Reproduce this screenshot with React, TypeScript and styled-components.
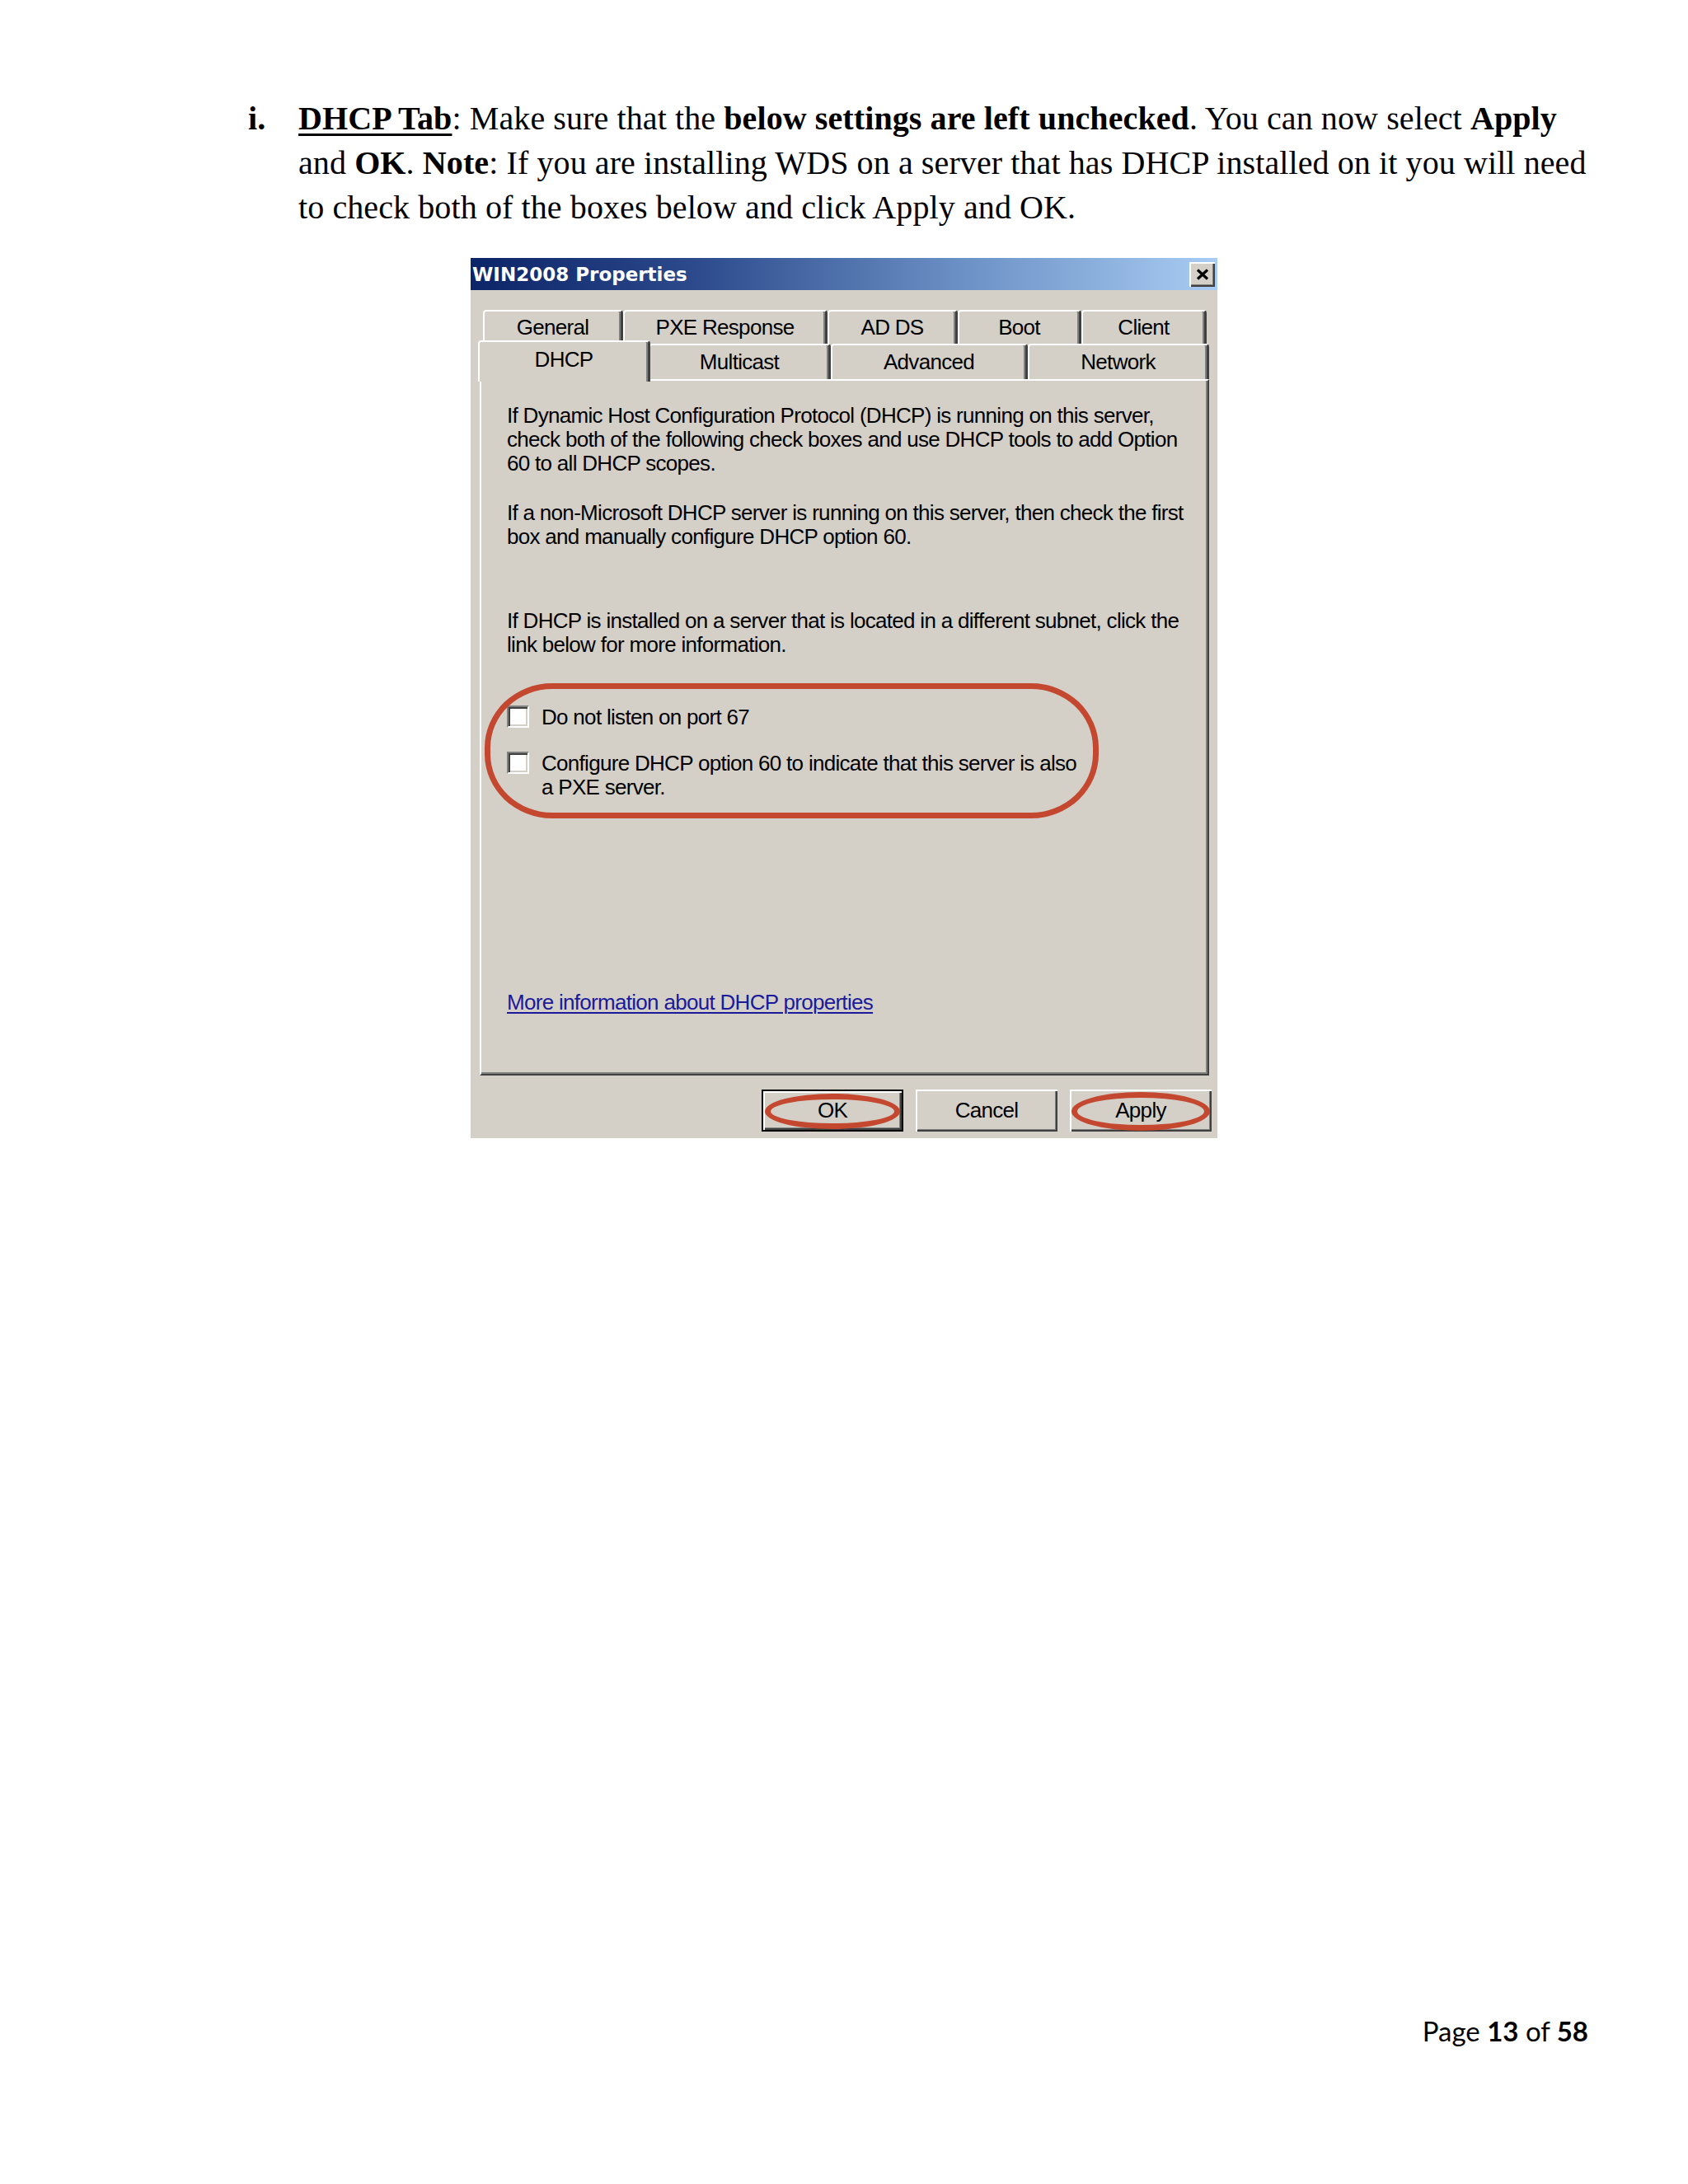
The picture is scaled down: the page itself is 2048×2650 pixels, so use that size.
import { FC, ReactNode } from "react";
import styled, { createGlobalStyle } from "styled-components";

const GlobalStyle = createGlobalStyle`
  html, body {
    margin: 0;
    padding: 0;
    background: #ffffff;
  }
`;

const Page = styled.div`
  width: 2048px;
  min-height: 2650px;
  box-sizing: border-box;
  padding-top: 117px;
  display: flex;
  flex-direction: column;
`;

/* document step text */

const Step = styled.div`
  display: flex;
  padding-left: 301px;
  font: 40px/54px "Liberation Serif", "Times New Roman", serif;
  letter-spacing: 0.1px;
  color: #000;
`;

const Marker = styled.span`
  width: 61px;
  flex-shrink: 0;
  font-weight: 700;
`;

const StepLines = styled.div`
  display: flex;
  flex-direction: column;
  white-space: nowrap;
`;

const Strong = styled.b`
  font-weight: 700;
`;

const Underlined = styled.u`
  text-decoration-thickness: 3px;
  text-underline-offset: 5px;
`;

/* dialog window */

const Dialog = styled.div`
  margin: 34px 0 0 571px;
  width: 906px;
  height: 1068px;
  background: #d4d0c8;
  display: flex;
  flex-direction: column;
  font: 26px/29px "Liberation Sans", Arial, sans-serif;
  letter-spacing: -0.7px;
  color: #000;
`;

const TitleBar = styled.div`
  height: 39px;
  flex-shrink: 0;
  display: flex;
  align-items: center;
  justify-content: space-between;
  padding: 0 3px 0 2px;
  background: linear-gradient(to right, #0c2468 0%, #2c4a8c 30%, #6a8fc4 65%, #a8ccf2 100%);
`;

const Title = styled.span`
  font: 700 23px "DejaVu Sans", Verdana, sans-serif;
  letter-spacing: 0;
  color: #ffffff;
`;

const CloseButton = styled.div`
  width: 31px;
  height: 30px;
  display: flex;
  align-items: center;
  justify-content: center;
  background: #d4d0c8;
  box-shadow:
    inset 2px 2px #ffffff,
    inset -2px -2px #404040,
    inset -3px -3px #808080;
`;

const DialogBody = styled.div`
  flex: 1;
  display: flex;
  flex-direction: column;
  padding: 24px 7px 0 11px;
`;

const TabRow = styled.div<{ $indent?: number; $height: number }>`
  display: flex;
  height: ${(p) => p.$height}px;
  padding-left: ${(p) => p.$indent ?? 0}px;
  position: relative;
  z-index: ${(p) => (p.$indent ? 0 : 1)};
`;

const Tab = styled.div<{ $width: number; $selected?: boolean }>`
  box-sizing: border-box;
  width: ${(p) => p.$width + (p.$selected ? 4 : 0)}px;
  height: ${(p) => (p.$selected ? "calc(100% + 7px)" : "100%")};
  margin: ${(p) => (p.$selected ? "-4px -2px 0" : "0")};
  flex-shrink: 0;
  display: flex;
  align-items: center;
  justify-content: center;
  padding-bottom: ${(p) => (p.$selected ? 6 : 0)}px;
  background: #d4d0c8;
  border-top: 2px solid #ffffff;
  border-left: 2px solid #ffffff;
  border-right: 3px solid #404040;
  border-radius: 4px 4px 0 0;
  box-shadow: inset -2px 0 #808080;
  position: relative;
  z-index: ${(p) => (p.$selected ? 2 : 0)};
`;

const Panel = styled.div`
  box-sizing: border-box;
  width: 885px;
  height: 845px;
  flex-shrink: 0;
  position: relative;
  border: 2px solid;
  border-color: #ffffff #404040 #404040 #ffffff;
  box-shadow: inset -2px -2px #808080;
  padding: 28px 10px 0 31px;
  display: flex;
  flex-direction: column;
`;

const Para = styled.p<{ $gap: number }>`
  margin: ${(p) => p.$gap}px 0 0;
  white-space: nowrap;
`;

const CheckRow = styled.div<{ $gap: number }>`
  display: flex;
  align-items: flex-start;
  gap: 15px;
  margin-top: ${(p) => p.$gap}px;
  white-space: nowrap;
`;

const CheckBox = styled.span`
  box-sizing: border-box;
  width: 27px;
  height: 27px;
  flex-shrink: 0;
  background: #ffffff;
  border: 2px solid;
  border-color: #808080 #ffffff #ffffff #808080;
  box-shadow: inset 2px 2px #404040, inset -2px -2px #d4d0c8;
`;

const Link = styled.a`
  margin-top: 232px;
  align-self: flex-start;
  color: #1a1a9a;
  text-decoration: underline;
  text-decoration-thickness: 2px;
  text-underline-offset: 3px;
`;

const Highlight = styled.div`
  position: absolute;
  left: 4px;
  top: 367px;
  width: 745px;
  height: 164px;
  box-sizing: border-box;
  border: 7px solid #c4472f;
  border-radius: 82px / 78px;
  pointer-events: none;
`;

const ButtonRow = styled.div`
  display: flex;
  justify-content: flex-end;
  gap: 15px;
  margin-top: 17px;
`;

const Button = styled.div<{ $default?: boolean }>`
  box-sizing: border-box;
  width: 172px;
  height: 51px;
  position: relative;
  display: flex;
  align-items: center;
  justify-content: center;
  background: #d4d0c8;
  border: ${(p) => (p.$default ? "2px solid #000" : "0")};
  box-shadow:
    inset 2px 2px #ffffff,
    inset -2px -2px #404040,
    inset -3px -3px #808080;
`;

const ButtonRing = styled.span`
  position: absolute;
  inset: 3px 2px 1px 2px;
  border: 7px solid #c4472f;
  border-radius: 50%;
  pointer-events: none;
`;

/* footer */

const Footer = styled.div`
  margin-top: auto;
  display: flex;
  justify-content: flex-end;
  padding: 0 121px 166px 0;
  font: 33px/40px Lato, "Open Sans", sans-serif;
  color: #000;
`;

const topTabs = [
  { label: "General", width: 170 },
  { label: "PXE Response", width: 248 },
  { label: "AD DS", width: 158 },
  { label: "Boot", width: 150 },
  { label: "Client", width: 152 },
];

const bottomTabs = [
  { label: "DHCP", width: 205, selected: true },
  { label: "Multicast", width: 221 },
  { label: "Advanced", width: 239 },
  { label: "Network", width: 220 },
];

const CloseIcon: FC = () => (
  <svg width="16" height="14" viewBox="0 0 16 14">
    <path d="M2 1.5 L14 12.5 M14 1.5 L2 12.5" stroke="#000" strokeWidth="3.2" />
  </svg>
);

const Option: FC<{ gap: number; children: ReactNode }> = ({ gap, children }) => (
  <CheckRow $gap={gap}>
    <CheckBox />
    <span>{children}</span>
  </CheckRow>
);

export default function App() {
  return (
    <>
      <GlobalStyle />
      <Page>
        <Step>
          <Marker>i.</Marker>
          <StepLines>
            <span>
              <Underlined>
                <Strong>DHCP Tab</Strong>
              </Underlined>
              : Make sure that the <Strong>below settings are left unchecked</Strong>. You can now select{" "}
              <Strong>Apply</Strong>
            </span>
            <span>
              and <Strong>OK</Strong>. <Strong>Note</Strong>: If you are installing WDS on a server that has DHCP
              installed on it you will need
            </span>
            <span>to check both of the boxes below and click Apply and OK.</span>
          </StepLines>
        </Step>

        <Dialog>
          <TitleBar>
            <Title>WIN2008 Properties</Title>
            <CloseButton>
              <CloseIcon />
            </CloseButton>
          </TitleBar>

          <DialogBody>
            <TabRow $indent={4} $height={41}>
              {topTabs.map((t) => (
                <Tab key={t.label} $width={t.width}>
                  {t.label}
                </Tab>
              ))}
            </TabRow>
            <TabRow $height={43}>
              {bottomTabs.map((t) => (
                <Tab key={t.label} $width={t.width} $selected={t.selected}>
                  {t.label}
                </Tab>
              ))}
            </TabRow>

            <Panel>
              <Para $gap={0}>
                If Dynamic Host Configuration Protocol (DHCP) is running on this server,
                <br />
                check both of the following check boxes and use DHCP tools to add Option
                <br />
                60 to all DHCP scopes.
              </Para>
              <Para $gap={31}>
                If a non-Microsoft DHCP server is running on this server, then check the first
                <br />
                box and manually configure DHCP option 60.
              </Para>
              <Para $gap={73}>
                If DHCP is installed on a server that is located in a different subnet, click the
                <br />
                link below for more information.
              </Para>

              <Option gap={59}>Do not listen on port 67</Option>
              <Option gap={27}>
                Configure DHCP option 60 to indicate that this server is also
                <br />a PXE server.
              </Option>

              <Link href="#">More information about DHCP properties</Link>

              <Highlight />
            </Panel>

            <ButtonRow>
              <Button $default>
                OK
                <ButtonRing />
              </Button>
              <Button>Cancel</Button>
              <Button>
                Apply
                <ButtonRing />
              </Button>
            </ButtonRow>
          </DialogBody>
        </Dialog>

        <Footer>
          <span>
            Page <Strong>13</Strong> of <Strong>58</Strong>
          </span>
        </Footer>
      </Page>
    </>
  );
}
